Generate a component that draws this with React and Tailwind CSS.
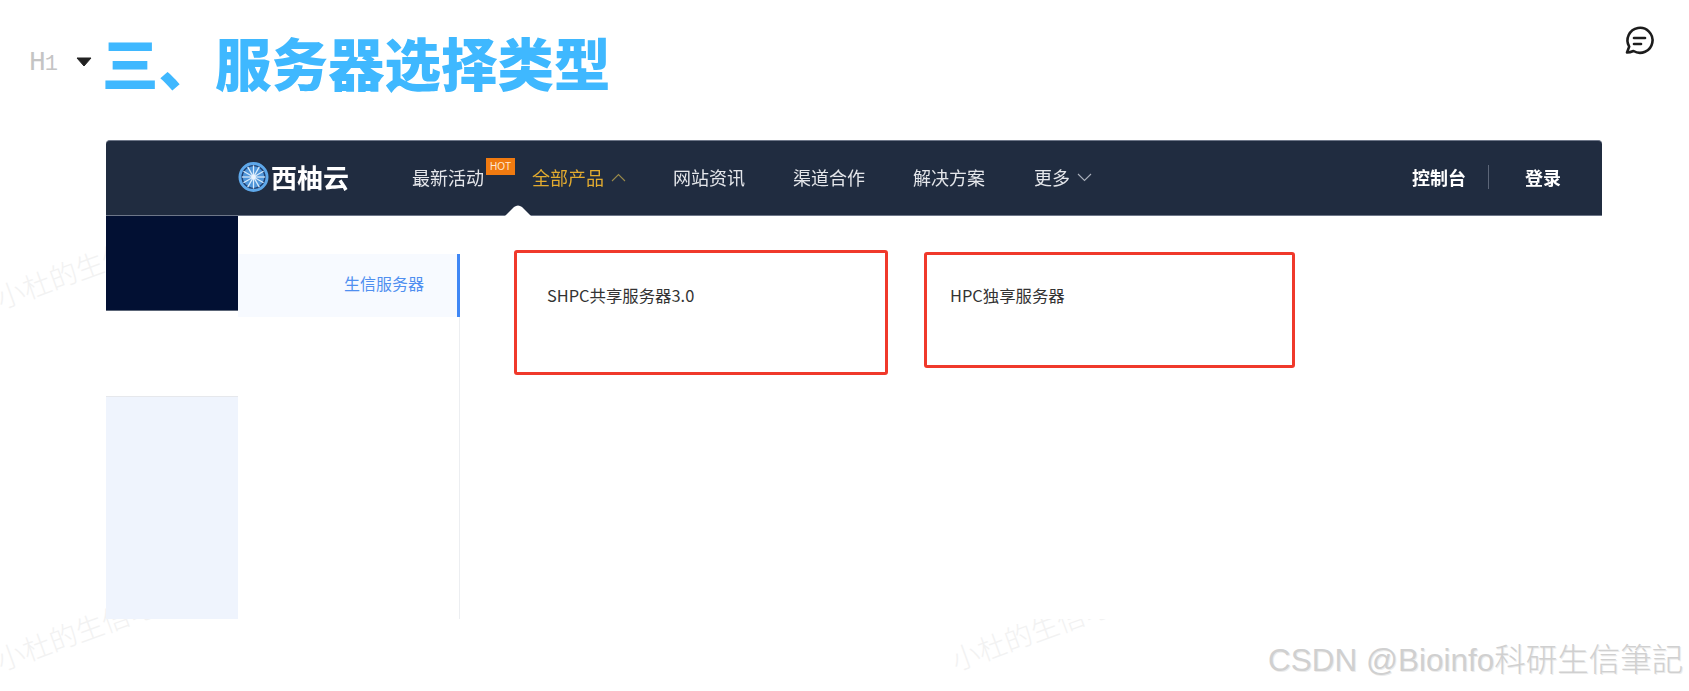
const CJK = "font-['Noto_Sans_CJK_SC','Noto_Sans',sans-serif]";

function Chevron({ up, color }) {
  return (
    <svg width="15" height="9" viewBox="0 0 15 9" fill="none" stroke={color} strokeWidth="1.1">
      {up ? <path d="M1 8 L7.5 1.5 L14 8" /> : <path d="M1 1 L7.5 7.5 L14 1" />}
    </svg>
  );
}

function Wheel() {
  const spokes = [0, 30, 60, 90, 120, 150];
  return (
    <svg width="31" height="32" viewBox="0 0 32 32" className="shrink-0">
      <circle cx="16" cy="16" r="14" fill="#1f3f70" stroke="#5ea8ea" strokeWidth="3" />
      <circle cx="16" cy="16" r="11" fill="#4f95d8" />
      {spokes.map((a) => (
        <line key={a} x1="16" y1="4" x2="16" y2="28" stroke="#d8ebfb" strokeWidth="1.3" transform={`rotate(${a} 16 16)`} />
      ))}
      <circle cx="16" cy="16" r="2.4" fill="#eaf4fd" />
    </svg>
  );
}

function Watermark({ className }) {
  return (
    <div className={`absolute text-[28px] leading-none whitespace-nowrap text-[#f2f2f2] -rotate-[20deg] origin-left font-light ${className}`}>
      小杜的生信笔记
    </div>
  );
}

function NavItem({ children, className = "" }) {
  return <span className={`text-[18px] leading-none whitespace-nowrap ${className}`}>{children}</span>;
}

export default function App() {
  return (
    <div className={`relative w-[1689px] h-[691px] overflow-hidden bg-white ${CJK}`}>
      <Watermark className="-left-[3px] top-[284px]" />
      <Watermark className="-left-[3px] top-[646px]" />
      <Watermark className="left-[952px] top-[646px]" />

      <div className="relative flex items-center h-[140px] pb-[14px]">
        <span className="ml-[29px] w-[30px] text-[28px] leading-none text-[#c4c4c4] font-['Liberation_Mono',monospace] tracking-[-1px]">
          H<span className="text-[22px]">1</span>
        </span>
        <svg width="16" height="10" viewBox="0 0 16 10" className="ml-[17px] mr-[10px] mb-[2px]">
          <path d="M1 1 H15 L8 9 Z" fill="#222" stroke="#222" strokeLinejoin="round" />
        </svg>
        <h1 className="text-[56.5px] leading-none font-black text-[#3fb8ff] whitespace-nowrap mb-[4px]">三、服务器选择类型</h1>
        <svg width="32" height="32" viewBox="0 0 32 32" fill="none" stroke="#1c1c1c" strokeWidth="2.6" strokeLinecap="round" className="absolute left-[1623px] top-[25px]">
          <path d="M4 27.5 L6.2 21.6 A12.5 12.5 0 1 1 10.5 26 Q7 27.5 4 27.5 Z" strokeLinejoin="round" />
          <path d="M11 13 H22" />
          <path d="M11 19 H18" />
        </svg>
      </div>

      <div className="relative ml-[106px] w-[1496px] blur-[0.4px]">
        <div className="relative flex items-center h-[76px] pb-[2px] bg-[#202c40] rounded-t-[4px] border-t border-b border-[#6d7688] text-[#e4e6ea]">
          <div className="ml-[132px] flex items-center">
            <Wheel />
            <span className="ml-[2px] text-[26px] font-bold leading-none text-white whitespace-nowrap">西柚云</span>
          </div>
          <div className="relative ml-[63px] flex items-center">
            <NavItem>最新活动</NavItem>
            <span className="absolute left-[74px] -top-[10px] w-[29px] h-[17px] bg-[#f07a10] text-[10px] leading-[17px] text-center text-[#ffe9d0] font-['Liberation_Sans',sans-serif]">HOT</span>
          </div>
          <NavItem className="ml-[48px] text-[#e2ab2f]">全部产品</NavItem>
          <span className="ml-[7px]"><Chevron up color="#9a8a4a" /></span>
          <NavItem className="ml-[47px]">网站资讯</NavItem>
          <NavItem className="ml-[48px]">渠道合作</NavItem>
          <NavItem className="ml-[48px]">解决方案</NavItem>
          <NavItem className="ml-[49px]">更多</NavItem>
          <span className="ml-[7px]"><Chevron color="#a9afba" /></span>
          <NavItem className="ml-[320px] font-bold text-white">控制台</NavItem>
          <span className="ml-[22px] w-px h-[24px] bg-[#5c6678]" />
          <NavItem className="ml-[36px] font-bold text-white">登录</NavItem>
          <svg width="26" height="11" viewBox="0 0 26 11" className="absolute left-[399px] -bottom-px">
            <path d="M0 11 L9 2 Q13 -1 17 2 L26 11 Z" fill="#fff" />
          </svg>
        </div>

        <div className="flex h-[403px] bg-white">
          <div className="flex flex-col w-[132px] shrink-0">
            <div className="h-[95px] bg-[#021033] border-b border-[#5c6678]" />
            <div className="h-[85px] bg-white" />
            <div className="flex-1 bg-[#eff4fd] border-t border-[#e6e8ec]" />
          </div>
          <div className="flex flex-col w-[222px] shrink-0">
            <div className="mt-[38px] h-[63px] flex items-center justify-end pr-[33px] pb-[6px] bg-[#f7faff] border-r-[3px] border-[#3f87f5] text-[16px] text-[#4f8ff0]">
              生信服务器
            </div>
            <div className="flex-1 border-r border-[#eceef1]" />
          </div>
          <div className="flex items-start">
            <div className="ml-[54px] mt-[34px] w-[374px] h-[125px] border-[3px] border-[#f0392b] rounded-[3px] pl-[30px] pt-[32px] text-[16.4px] leading-[20px] text-[#333]">
              SHPC共享服务器3.0
            </div>
            <div className="ml-[36px] mt-[36px] w-[371px] h-[116px] border-[3px] border-[#f0392b] rounded-[3px] pl-[23px] pt-[30px] text-[16.4px] leading-[20px] text-[#333]">
              HPC独享服务器
            </div>
          </div>
        </div>
      </div>

      <div className="absolute left-[1268px] top-[640px] text-[31.5px] leading-[40px] whitespace-nowrap text-[#d0d0d0] font-['Liberation_Sans','Noto_Sans_CJK_TC',sans-serif] font-light [text-shadow:1px_1px_0_#ececec]">
        CSDN @Bioinfo科研生信筆記
      </div>
    </div>
  );
}
